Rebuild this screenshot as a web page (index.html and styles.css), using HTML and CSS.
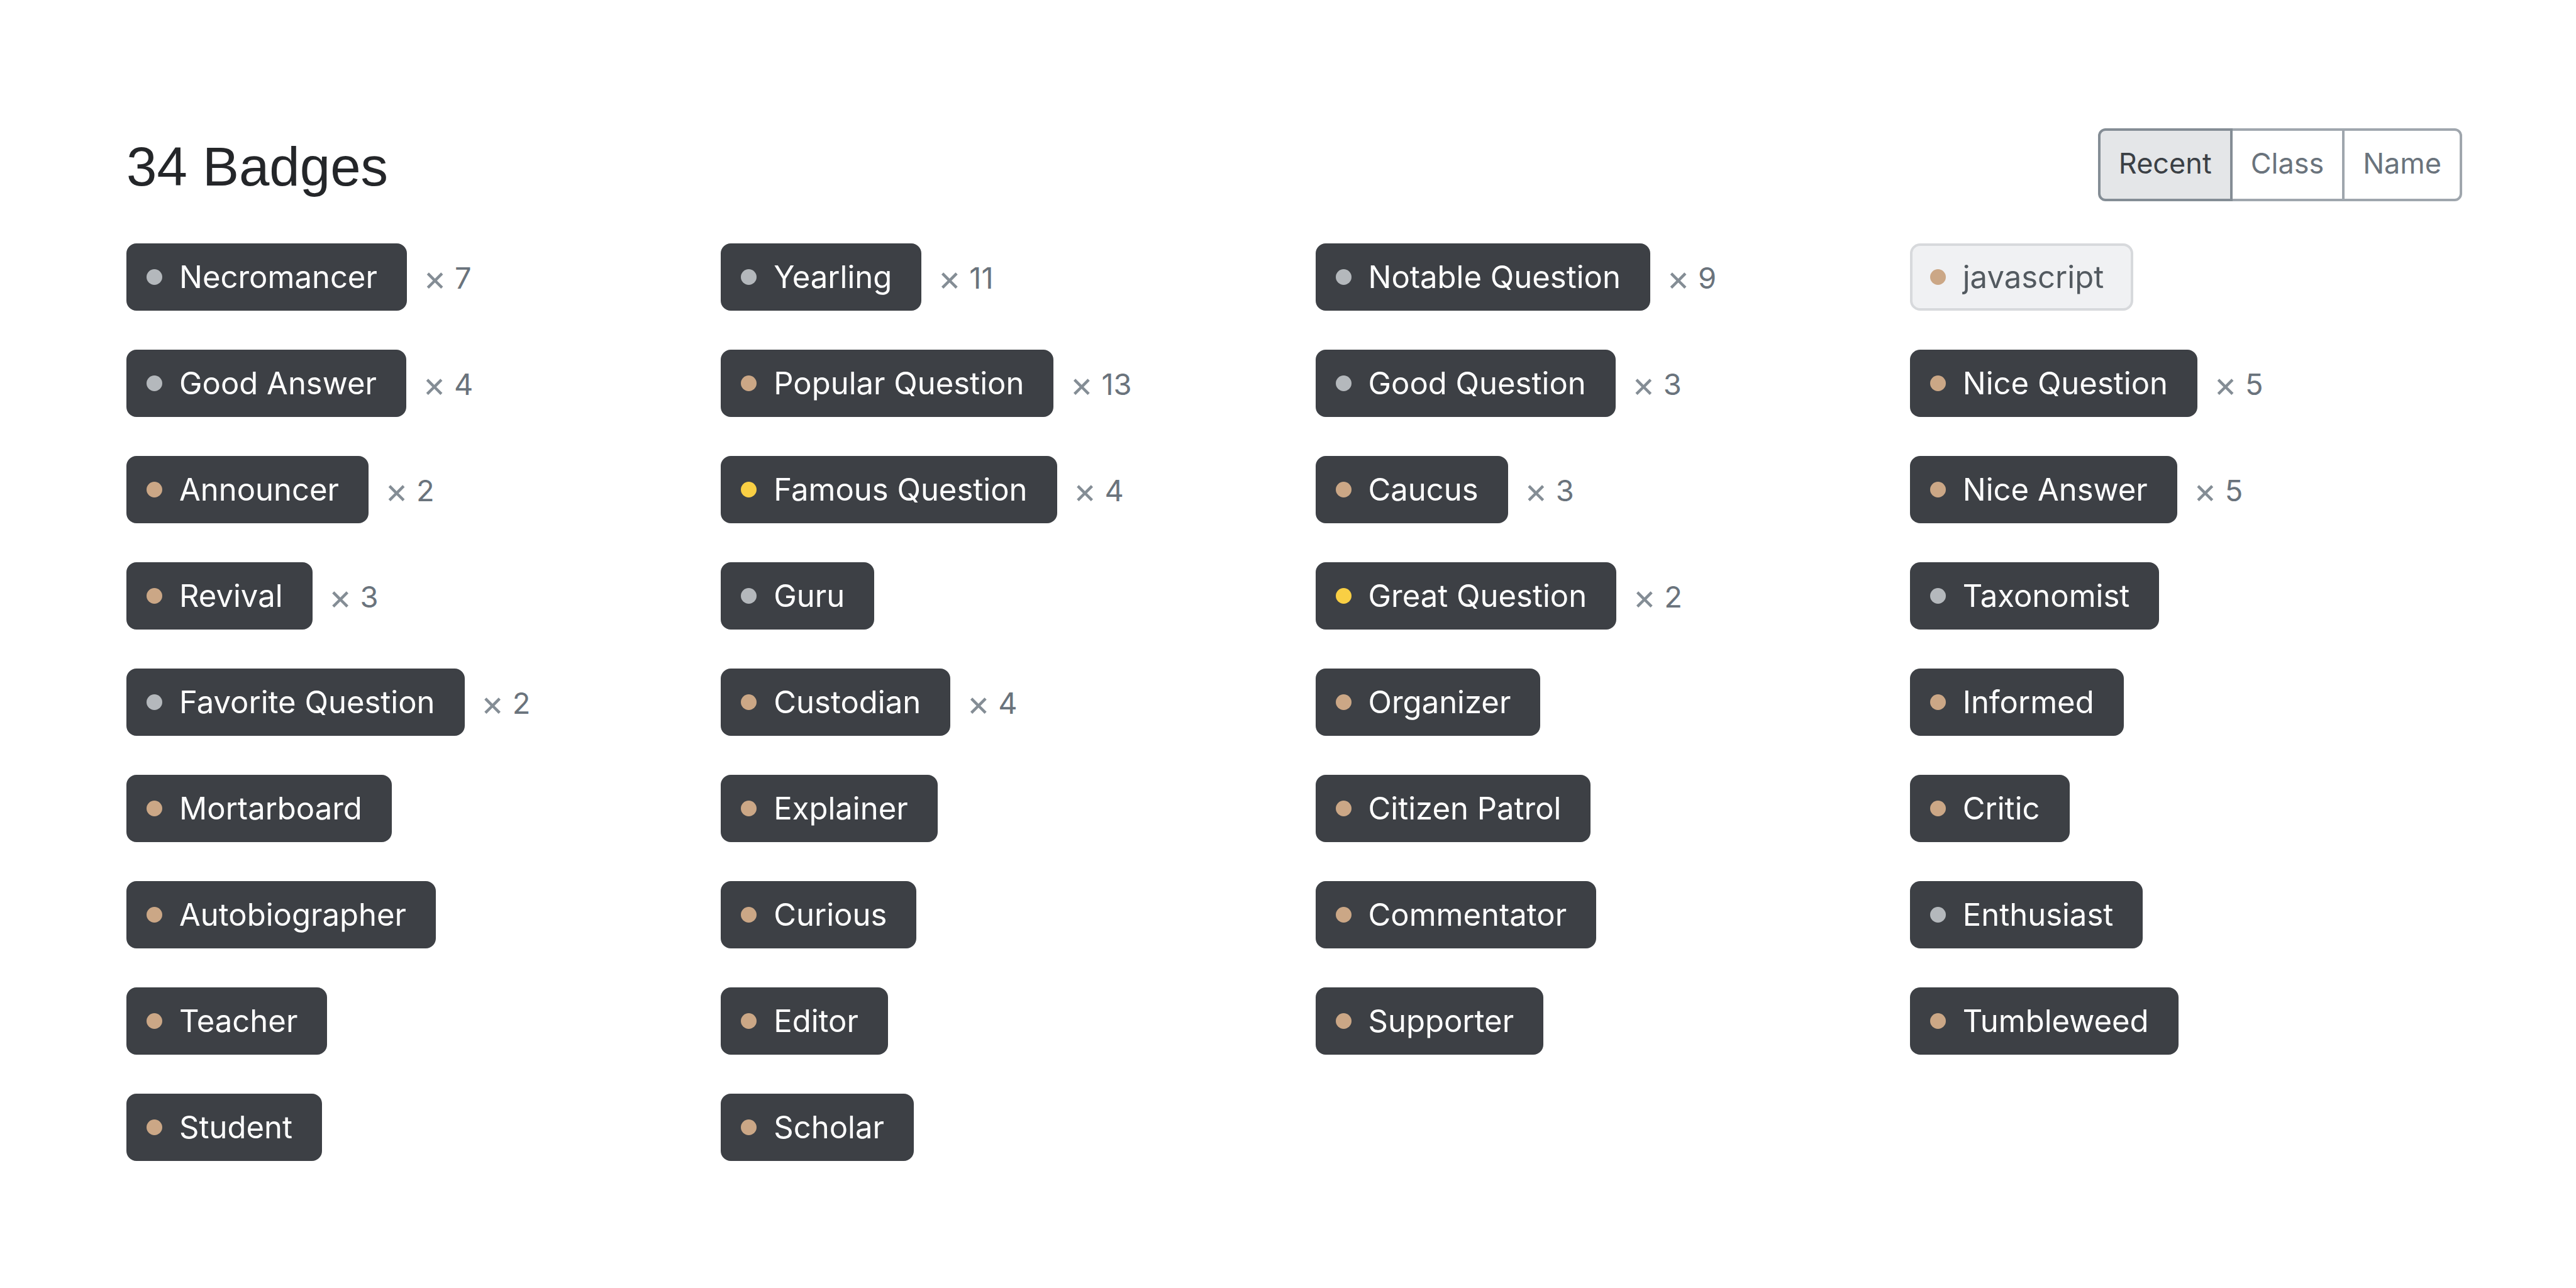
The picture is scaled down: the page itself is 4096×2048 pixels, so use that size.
FILE: index.html
```html
<!DOCTYPE html>
<html lang="en">
<head>
<meta charset="utf-8">
<title>Badges</title>
<link rel="stylesheet" href="styles.css">
</head>
<body>
<main class="page">
  <header class="header">
    <h1 class="title">34 Badges</h1>
    <div class="sort" role="group" aria-label="Sort badges">
      <button class="sort-button sort-button-active" type="button" aria-pressed="true">Recent</button>
      <button class="sort-button" type="button" aria-pressed="false">Class</button>
      <button class="sort-button" type="button" aria-pressed="false">Name</button>
    </div>
  </header>
  <ul class="badges">
    <li class="item"><a class="badge silver" href="#">Necromancer</a><span class="count"><span class="times">×</span> 7</span></li>
    <li class="item"><a class="badge silver" href="#">Yearling</a><span class="count"><span class="times">×</span> 11</span></li>
    <li class="item"><a class="badge silver" href="#">Notable Question</a><span class="count"><span class="times">×</span> 9</span></li>
    <li class="item"><a class="badge badge-tag bronze" href="#">javascript</a></li>
    <li class="item"><a class="badge silver" href="#">Good Answer</a><span class="count"><span class="times">×</span> 4</span></li>
    <li class="item"><a class="badge bronze" href="#">Popular Question</a><span class="count"><span class="times">×</span> 13</span></li>
    <li class="item"><a class="badge silver" href="#">Good Question</a><span class="count"><span class="times">×</span> 3</span></li>
    <li class="item"><a class="badge bronze" href="#">Nice Question</a><span class="count"><span class="times">×</span> 5</span></li>
    <li class="item"><a class="badge bronze" href="#">Announcer</a><span class="count"><span class="times">×</span> 2</span></li>
    <li class="item"><a class="badge gold" href="#">Famous Question</a><span class="count"><span class="times">×</span> 4</span></li>
    <li class="item"><a class="badge bronze" href="#">Caucus</a><span class="count"><span class="times">×</span> 3</span></li>
    <li class="item"><a class="badge bronze" href="#">Nice Answer</a><span class="count"><span class="times">×</span> 5</span></li>
    <li class="item"><a class="badge bronze" href="#">Revival</a><span class="count"><span class="times">×</span> 3</span></li>
    <li class="item"><a class="badge silver" href="#">Guru</a></li>
    <li class="item"><a class="badge gold" href="#">Great Question</a><span class="count"><span class="times">×</span> 2</span></li>
    <li class="item"><a class="badge silver" href="#">Taxonomist</a></li>
    <li class="item"><a class="badge silver" href="#">Favorite Question</a><span class="count"><span class="times">×</span> 2</span></li>
    <li class="item"><a class="badge bronze" href="#">Custodian</a><span class="count"><span class="times">×</span> 4</span></li>
    <li class="item"><a class="badge bronze" href="#">Organizer</a></li>
    <li class="item"><a class="badge bronze" href="#">Informed</a></li>
    <li class="item"><a class="badge bronze" href="#">Mortarboard</a></li>
    <li class="item"><a class="badge bronze" href="#">Explainer</a></li>
    <li class="item"><a class="badge bronze" href="#">Citizen Patrol</a></li>
    <li class="item"><a class="badge bronze" href="#">Critic</a></li>
    <li class="item"><a class="badge bronze" href="#">Autobiographer</a></li>
    <li class="item"><a class="badge bronze" href="#">Curious</a></li>
    <li class="item"><a class="badge bronze" href="#">Commentator</a></li>
    <li class="item"><a class="badge silver" href="#">Enthusiast</a></li>
    <li class="item"><a class="badge bronze" href="#">Teacher</a></li>
    <li class="item"><a class="badge bronze" href="#">Editor</a></li>
    <li class="item"><a class="badge bronze" href="#">Supporter</a></li>
    <li class="item"><a class="badge bronze" href="#">Tumbleweed</a></li>
    <li class="item"><a class="badge bronze" href="#">Student</a></li>
    <li class="item"><a class="badge bronze" href="#">Scholar</a></li>
  </ul>
</main>
</body>
</html>
```

FILE: styles.css
```css
* {
  box-sizing: border-box;
}

body {
  margin: 0;
  background: #ffffff;
  color: #242629;
  font-family: Inter, "Liberation Sans", sans-serif;
}

.page {
  padding: 204px 181px 200px 201px;
}

.header {
  display: flex;
  align-items: center;
  justify-content: space-between;
  margin-bottom: 67px;
}

.title {
  margin: 0;
  padding-top: 6px;
  font-family: "Liberation Sans", sans-serif;
  font-size: 87px;
  font-weight: 400;
  line-height: 110px;
}

.sort {
  display: flex;
}

.sort-button {
  height: 116px;
  margin: 0 0 0 -4px;
  padding: 0 29px 4px;
  border: 4px solid #9fa6ad;
  background: #ffffff;
  color: #6a737c;
  font-family: inherit;
  font-size: 45px;
  line-height: 60px;
}

.sort-button:first-child {
  margin-left: 0;
  border-radius: 12px 0 0 12px;
}

.sort-button:last-child {
  border-radius: 0 12px 12px 0;
}

.sort-button-active {
  position: relative;
  border-color: #848d95;
  background: #e4e6e8;
  color: #3b4045;
}

.badges {
  display: grid;
  grid-template-columns: repeat(4, minmax(0, 1fr));
  gap: 62px 67px;
  margin: 0;
  padding: 0;
  list-style: none;
}

.item {
  display: flex;
  align-items: center;
  gap: 26px;
}

.badge {
  display: flex;
  align-items: center;
  gap: 27px;
  height: 107px;
  padding: 0 43px 0 28px;
  border: 4px solid #3d4045;
  border-radius: 16px;
  background: #3d4045;
  color: #ffffff;
  font-size: 49px;
  line-height: 60px;
  text-decoration: none;
  white-space: nowrap;
}

.badge::before {
  content: "";
  width: 25px;
  height: 25px;
  border-radius: 50%;
}

.badge-tag {
  border-color: #d7d9dc;
  background: #f0f1f3;
  color: #535a60;
}

.gold::before {
  background: #f9cf44;
}

.silver::before {
  background: #b4b8bc;
}

.bronze::before {
  background: #cba786;
}

.count {
  display: flex;
  align-items: center;
  gap: 13px;
  padding-top: 3px;
  color: #6a737c;
  font-size: 47px;
  line-height: 60px;
  white-space: nowrap;
}

.times {
  color: #848d95;
  font-size: 56px;
}
```
